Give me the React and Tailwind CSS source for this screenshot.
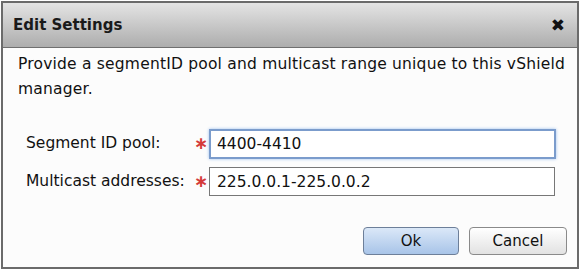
import React, { useState } from 'react';

const App = () => {
  const [pool, setPool] = useState('4400-4410');
  const [addresses, setAddresses] = useState('225.0.0.1-225.0.0.2');

  return (
    <div className="w-[580px] h-[270px] bg-white p-[1px]" style={{ fontFamily: '"DejaVu Sans", Verdana, sans-serif' }}>
      <div className="w-[578px] h-[268px] border-2 border-[#6b6b6b] bg-[#fcfcfc] flex flex-col">
        {/* Barre de titre */}
        <div className="h-[45px] shrink-0 flex items-center justify-between px-[10px] bg-gradient-to-b from-[#e4e4e4] to-[#adadad] border-b border-[#6f6f6f]">
          <span className="text-[15px] font-bold text-[#1a1a1a]">Edit Settings</span>
          <span className="text-[17px] leading-none text-[#111] mr-[2px]">✖</span>
        </div>

        <p className="pl-[15px] pr-[2px] pt-[4px] text-[15.5px] tracking-[0.2px] leading-[25px] text-[#111]">
          Provide a segmentID pool and multicast range unique to this vShield manager.
        </p>

        {/* Formulaire */}
        <div className="mt-[27px] flex flex-col gap-[8px] pl-[23px] pr-[20px]">
          <div className="flex items-center">
            <label className="w-[168px] text-[15.5px] text-[#111]">Segment ID pool:</label>
            <span className="w-[15px] text-[#d43a3a] text-[17px] font-bold">∗</span>
            <input
              value={pool}
              onChange={(e) => setPool(e.target.value)}
              className="w-[347px] h-[30px] px-[6px] text-[15.5px] text-[#111] bg-white border-2 border-[#7b9ccc] shadow-[0_0_3px_#9cc0ef] outline-none"
              style={{ fontFamily: '"DejaVu Sans", Verdana, sans-serif' }}
            />
          </div>
          <div className="flex items-center">
            <label className="w-[168px] text-[15.5px] text-[#111]">Multicast addresses:</label>
            <span className="w-[15px] text-[#d43a3a] text-[17px] font-bold">∗</span>
            <input
              value={addresses}
              onChange={(e) => setAddresses(e.target.value)}
              className="w-[346px] h-[29px] px-[7px] text-[15.5px] text-[#111] bg-white border border-[#777] outline-none"
              style={{ fontFamily: '"DejaVu Sans", Verdana, sans-serif' }}
            />
          </div>
        </div>

        {/* Boutons */}
        <div className="mt-auto mb-[12px] flex justify-end gap-[10px] pr-[10px]">
          <button className="w-[96px] h-[28px] rounded-[4px] border border-[#6d7f99] bg-gradient-to-b from-[#dbe8f8] to-[#a8c4e8] text-[15px] text-[#111]">
            Ok
          </button>
          <button className="w-[98px] h-[28px] rounded-[4px] border border-[#8a8a8a] bg-gradient-to-b from-[#ffffff] to-[#e2e2e2] text-[15px] text-[#111]">
            Cancel
          </button>
        </div>
      </div>
    </div>
  );
};

export default App;
